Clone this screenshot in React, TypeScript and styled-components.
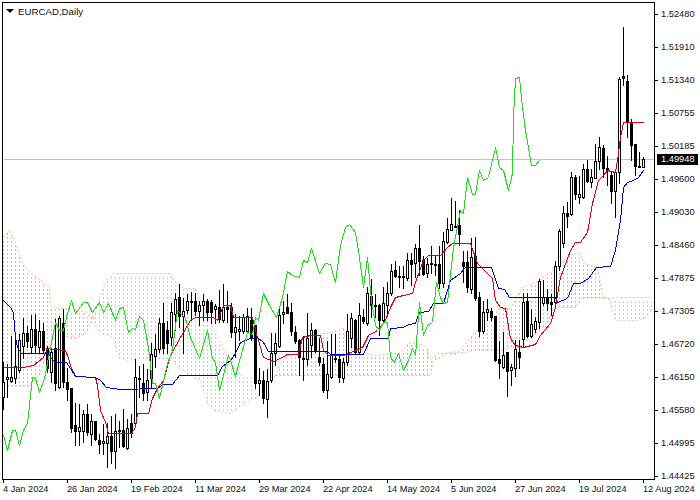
import React from "react";
import styled, { createGlobalStyle } from "styled-components";

const Global = createGlobalStyle`
  html, body { margin: 0; padding: 0; background: #fff; overflow: hidden; }
  body { font-family: "Liberation Sans", Arial, sans-serif; }
`;

type Pt = [number, number];

const candles: number[][] = [
  [361,409,382,397,1],[363,397,377,379,1],[335,382,377,381,1],[335,383,366,378,1],[333,372,340,370,1],[317,358,333,346,1],[325,347,333,341,0],[314,352,329,347,1],[313,353,329,345,0],[319,353,331,347,1],
  [322,353,331,350,0],[345,372,348,368,0],[348,382,352,372,1],[318,390,348,383,0],[315,388,318,387,1],[308,387,323,382,0],[367,400,382,389,0],[388,432,388,428,0],[402,445,425,431,0],[403,445,427,431,1],
  [409,442,414,431,1],[403,435,414,432,0],[413,445,421,434,1],[420,440,421,439,0],[433,453,440,444,0],[423,454,441,443,1],[422,467,436,443,1],[415,463,436,451,0],[413,468,431,451,1],[420,447,430,431,1],
  [408,447,430,446,0],[418,449,428,448,1],[413,437,423,433,0],[358,425,377,423,1],[365,397,378,379,0],[363,400,383,393,0],[368,400,380,392,1],[342,388,354,378,1],[333,367,349,356,1],[317,352,323,349,1],
  [302,353,323,348,0],[320,353,330,343,0],[302,345,312,337,1],[292,330,299,314,1],[283,327,297,316,0],[297,353,311,316,1],[293,313,301,310,1],[291,320,301,302,0],[292,315,301,311,0],[300,325,305,311,1],
  [293,320,301,305,1],[298,320,301,312,0],[299,323,302,312,0],[303,323,306,309,1],[289,322,307,319,0],[283,322,307,320,1],[290,322,307,309,0],[302,337,307,332,0],[313,357,327,332,1],[315,340,329,331,1],
  [313,333,317,331,1],[307,332,316,331,1],[307,340,320,337,0],[325,388,325,383,0],[367,395,380,383,1],[370,403,380,398,0],[368,417,381,399,1],[332,382,353,380,1],[332,365,343,353,1],[305,347,315,346,1],
  [300,323,312,314,1],[293,313,307,313,0],[302,335,312,331,0],[325,343,332,341,0],[338,375,340,357,0],[335,380,358,359,0],[312,365,338,359,1],[322,357,330,345,1],[328,352,330,350,0],[337,365,357,362,0],
  [357,392,364,390,0],[340,398,374,390,1],[333,378,354,377,1],[333,362,358,359,0],[353,382,359,377,0],[357,382,362,378,1],[313,365,331,362,1],[312,347,318,338,1],[318,353,320,352,0],[302,353,315,352,1],
  [308,323,317,321,0],[286,325,293,323,1],[278,317,296,305,0],[293,317,305,306,0],[303,335,305,320,0],[286,322,303,320,1],[281,315,293,305,1],[263,295,271,293,1],[260,277,270,276,0],[265,287,276,277,0],
  [265,288,276,277,0],[252,280,260,278,1],[252,285,260,264,0],[243,277,248,263,1],[224,275,248,261,0],[255,275,260,274,0],[257,277,264,273,1],[245,273,263,264,0],[255,275,264,265,0],[245,288,264,283,0],
  [231,287,241,283,1],[217,243,229,242,1],[197,230,224,230,1],[200,227,226,227,0],[209,245,225,234,0],[250,282,262,266,0],[250,292,262,287,0],[237,293,257,289,1],[236,300,256,298,0],[291,336,297,331,0],
  [300,333,312,331,1],[298,320,309,312,1],[307,320,311,317,0],[316,361,316,360,0],[340,378,359,363,0],[331,368,355,367,1],[352,396,352,371,0],[363,385,367,370,1],[339,376,349,368,1],[339,368,352,357,0],
  [292,347,302,339,1],[292,337,301,336,0],[308,337,324,336,1],[316,332,321,329,1],[278,328,281,322,1],[279,305,297,303,1],[288,310,298,303,0],[293,315,302,304,0],[260,307,266,302,1],[228,270,231,266,1],
  [205,247,213,243,1],[201,227,213,216,0],[171,215,177,214,1],[174,199,177,194,0],[175,203,194,197,1],[163,198,169,197,1],[159,182,169,181,0],[168,187,177,182,1],[143,178,161,178,1],[136,169,147,161,1],
  [144,177,148,168,0],[155,185,168,170,0],[170,203,175,191,0],[168,217,172,191,1],[76,183,79,172,1],[26,85,76,78,0],[74,137,81,122,0],[118,160,122,145,0],[144,175,144,166,0],[151,167,166,167,0],
  [156,167,159,167,1],
];

const blue: Pt[] = [[3,300],[11,308],[13,313],[15,337],[17,347],[21,353],[43,353],[47,352],[51,358],[55,362],[66,362],[70,368],[75,376],[95,377],[100,380],[106,387],[120,389],[157,388],[163,384],[172,384],[179,375],[217,375],[222,366],[230,360],[235,353],[240,342],[250,338],[257,337],[263,342],[268,351],[327,351],[330,354],[363,354],[370,338],[388,338],[390,328],[403,327],[408,324],[415,323],[419,312],[428,311],[433,303],[443,303],[450,280],[460,273],[465,267],[491,267],[498,288],[504,289],[509,297],[555,297],[557,302],[567,298],[573,283],[580,283],[588,278],[596,267],[610,266],[615,250],[620,220],[623,187],[627,182],[633,180],[638,177],[643,170]];

const red: Pt[] = [[3,367],[23,367],[33,365],[43,357],[47,348],[65,350],[68,358],[71,368],[75,376],[95,377],[97,385],[100,410],[105,422],[108,433],[131,433],[135,427],[137,413],[148,413],[152,398],[157,388],[163,380],[170,355],[180,337],[190,320],[195,317],[213,317],[217,320],[223,305],[230,305],[233,317],[252,317],[255,330],[260,347],[263,357],[273,361],[280,358],[287,354],[298,354],[302,337],[310,335],[320,335],[323,350],[328,355],[343,355],[362,347],[368,335],[377,330],[385,320],[390,307],[395,297],[403,295],[412,293],[415,282],[423,260],[428,255],[440,255],[447,247],[452,243],[470,243],[477,263],[492,278],[495,300],[500,307],[505,308],[510,338],[515,345],[523,347],[535,344],[540,335],[550,323],[555,307],[560,277],[570,250],[575,242],[580,242],[587,232],[592,203],[598,180],[603,175],[607,170],[615,172],[617,160],[620,137],[623,122],[643,122]];

const green: Pt[] = [[3,435],[7,450],[12,430],[15,430],[19,445],[23,430],[27,423],[32,377],[35,378],[39,392],[44,378],[50,347],[55,322],[59,330],[63,330],[67,313],[71,300],[75,313],[83,302],[87,302],[92,312],[99,302],[103,312],[108,303],[115,320],[119,308],[123,307],[128,332],[132,328],[135,329],[139,316],[143,320],[148,347],[152,383],[155,383],[159,398],[167,363],[172,350],[177,310],[185,318],[190,337],[199,358],[207,330],[212,358],[215,362],[219,390],[228,355],[230,360],[235,376],[240,357],[247,332],[252,334],[255,317],[258,320],[263,293],[268,303],[276,317],[282,297],[287,271],[292,275],[299,277],[303,260],[307,262],[311,248],[319,273],[325,263],[330,264],[335,282],[340,245],[345,227],[349,224],[355,232],[358,250],[363,287],[367,257],[371,300],[375,325],[379,330],[383,322],[387,322],[390,357],[394,362],[398,353],[403,370],[408,360],[412,348],[415,355],[419,302],[423,335],[427,325],[432,322],[436,282],[440,297],[443,303],[447,302],[453,247],[460,210],[463,213],[467,177],[472,194],[475,194],[479,170],[483,180],[488,177],[495,147],[499,167],[503,170],[508,190],[512,173],[513,117],[515,78],[519,77],[522,107],[525,130],[531,165],[535,165],[539,160]];

const spanA: Pt[] = [[3,237],[9,229],[15,242],[22,263],[30,272],[43,282],[49,287],[50,305],[58,308],[80,310],[93,317],[97,330],[113,337],[118,357],[127,360],[147,357],[172,358],[177,367],[200,380],[208,405],[213,410],[230,413],[237,408],[247,400],[256,397],[265,385],[275,375],[280,363],[290,354],[300,354],[313,338],[320,333],[330,333],[343,328],[353,330],[363,353],[377,355],[393,353],[400,353],[407,343],[418,342],[427,347],[428,360],[437,353],[447,353],[460,350],[473,333],[493,318],[498,308],[510,308],[522,287],[535,282],[550,272],[563,260],[573,253],[580,253],[583,263],[597,267],[602,295],[608,298],[615,320],[636,320],[645,317],[651,310]];

const spanB: Pt[] = [[3,385],[30,385],[40,372],[45,357],[52,335],[75,337],[85,333],[93,317],[100,295],[107,278],[113,273],[170,273],[175,283],[183,288],[195,288],[200,300],[210,322],[225,353],[243,378],[263,378],[275,375],[430,375],[433,360],[447,353],[465,352],[475,349],[500,350],[510,347],[522,345],[547,322],[553,307],[575,307],[582,297],[600,297],[608,298],[617,297],[651,297]];

const prices = ["1.52480","1.51910","1.51340","1.50755","1.50185","1.49600","1.49030","1.48460","1.47875","1.47305","1.46720","1.46150","1.45580","1.44995","1.44425"];
const dates = ["4 Jan 2024","26 Jan 2024","19 Feb 2024","11 Mar 2024","29 Mar 2024","22 Apr 2024","14 May 2024","5 Jun 2024","27 Jun 2024","19 Jul 2024","12 Aug 2024"];

const at = (pts: Pt[], x: number): number => {
  for (let i = 1; i < pts.length; i++) {
    if (x <= pts[i][0]) {
      const [x0, y0] = pts[i - 1];
      const [x1, y1] = pts[i];
      return Math.round(y0 + ((y1 - y0) * (x - x0)) / (x1 - x0 || 1));
    }
  }
  return pts[pts.length - 1][1];
};
const toPoints = (pts: Pt[]) => pts.map((p) => p.join(",")).join(" ");

const ORANGE = "#f3b48a";
const THISTLE = "#dcc4cc";

const Frame = styled.div`
  width: 700px;
  height: 500px;
  padding: 2px 0 0 2px;
  box-sizing: border-box;
  display: grid;
  grid-template-columns: 653px 45px;
  grid-template-rows: 478px 20px;
  background: #fff;
  color: #000;
  overflow: hidden;
  font-size: 9px;
`;

const Plot = styled.div`
  position: relative;
  border: 1px solid #000;
  box-sizing: border-box;
`;

const ChartSvg = styled.svg`
  display: block;
  width: 651px;
  height: 476px;
`;

const Legend = styled.div`
  position: absolute;
  left: 3px;
  top: 2px;
  display: flex;
  align-items: center;
  gap: 4px;
  height: 12px;
  font-size: 9.7px;
  color: #111;
`;

const LegendArrow = styled.span`
  width: 0;
  height: 0;
  border-left: 4px solid transparent;
  border-right: 4px solid transparent;
  border-top: 4px solid #000;
`;

const PriceAxis = styled.div`
  position: relative;
  display: grid;
  grid-auto-rows: 33px;
  padding-top: 12px;
`;

const PriceRow = styled.div`
  display: flex;
  align-items: flex-start;
`;

const Tick = styled.span`
  width: 3px;
  height: 1px;
  background: #000;
`;

const PriceLabel = styled.span`
  margin: -5px 0 0 3px;
  line-height: 11px;
  font-size: 9.3px;
  color: #111;
`;

const Badge = styled.div`
  position: absolute;
  left: 2px;
  top: 152px;
  width: 41px;
  height: 11px;
  box-sizing: border-box;
  padding-left: 4px;
  background: #000;
  color: #fff;
  line-height: 11px;
  font-size: 9.3px;
`;

const TimeAxis = styled.div`
  grid-column: 1 / span 2;
  display: grid;
  grid-template-columns: repeat(11, 64px);
  padding-left: 1px;
`;

const TimeCell = styled.div`
  display: flex;
  flex-direction: column;
  align-items: flex-start;
  white-space: nowrap;
`;

const TimeTick = styled.span`
  width: 1px;
  height: 3px;
  background: #000;
`;

const TimeLabel = styled.span`
  margin-top: 1px;
  line-height: 11px;
  font-size: 9.2px;
  color: #111;
`;

const CloudDots = styled.path`
  fill: none;
  stroke-width: 1;
  shape-rendering: crispEdges;
`;

const Edge = styled.polyline`
  fill: none;
  stroke-width: 1;
  stroke-dasharray: 2 2;
`;

const BidLine = styled.line`
  stroke: #c0c0c0;
  stroke-width: 1;
  shape-rendering: crispEdges;
`;

const Wick = styled.line`
  stroke: #000;
  stroke-width: 1;
  shape-rendering: crispEdges;
`;

const Body = styled.rect<{ $hollow: boolean }>`
  fill: ${(p) => (p.$hollow ? "#fff" : "#000")};
  stroke: #000;
  stroke-width: 1;
  shape-rendering: crispEdges;
`;

const Trace = styled.polyline`
  fill: none;
  stroke-width: 1;
  stroke-linejoin: round;
  shape-rendering: crispEdges;
`;

const coolX = (x: number) => (x > 93 && x < 275) || x > 608;

const dotPath = (cool: boolean) => {
  let d = "";
  for (let x = 3; x <= 651; x += 4) {
    if (coolX(x) !== cool) continue;
    const a = at(spanA, x);
    const b = at(spanB, x);
    const y2 = Math.max(a, b);
    for (let y = Math.min(a, b); y < y2; y += 1) {
      if (y % 4 === 0) d += `M${x} ${y}v2`;
    }
  }
  return d;
};

const Cloud = () => {
  const ranges: [number, number, string][] = [
    [3, 93, ORANGE],
    [93, 275, THISTLE],
    [275, 608, ORANGE],
    [608, 651, THISTLE],
  ];
  return (
    <g>
      <CloudDots d={dotPath(false)} stroke={ORANGE} />
      <CloudDots d={dotPath(true)} stroke={THISTLE} />
      {ranges.map(([from, to, c]) => (
        <g key={from}>
          <Edge points={toPoints(spanA.filter((p) => p[0] >= from && p[0] <= to))} stroke={c} />
          <Edge points={toPoints(spanB.filter((p) => p[0] >= from && p[0] <= to))} stroke={c} />
        </g>
      ))}
    </g>
  );
};

const Candles = () => (
  <g>
    {candles.map(([hi, lo, top, bot, hollow], i) => {
      const x = 3 + 4 * i;
      return (
        <g key={x}>
          <Wick x1={x} x2={x} y1={hi} y2={lo} />
          <Body x={x - 1} y={top} width={2} height={Math.max(bot - top, 0.01)} $hollow={hollow === 1} />
        </g>
      );
    })}
  </g>
);

export default function App() {
  return (
    <>
      <Global />
      <Frame>
        <Plot>
          <ChartSvg viewBox="3 3 651 476">
            <g transform="translate(0.5 0.5)">
              <Cloud />
              <BidLine x1={3} x2={654} y1={159} y2={159} />
              <Candles />
              <Trace points={toPoints(red)} stroke="#d4001c" />
              <Trace points={toPoints(blue)} stroke="#0000c8" />
              <Trace points={toPoints(green)} stroke="#1ed81e" />
            </g>
          </ChartSvg>
          <Legend>
            <LegendArrow />
            <span>EURCAD,Daily</span>
          </Legend>
        </Plot>
        <PriceAxis>
          {prices.map((p) => (
            <PriceRow key={p}>
              <Tick />
              <PriceLabel>{p}</PriceLabel>
            </PriceRow>
          ))}
          <Badge>1.49948</Badge>
        </PriceAxis>
        <TimeAxis>
          {dates.map((d) => (
            <TimeCell key={d}>
              <TimeTick />
              <TimeLabel>{d}</TimeLabel>
            </TimeCell>
          ))}
        </TimeAxis>
      </Frame>
    </>
  );
}
